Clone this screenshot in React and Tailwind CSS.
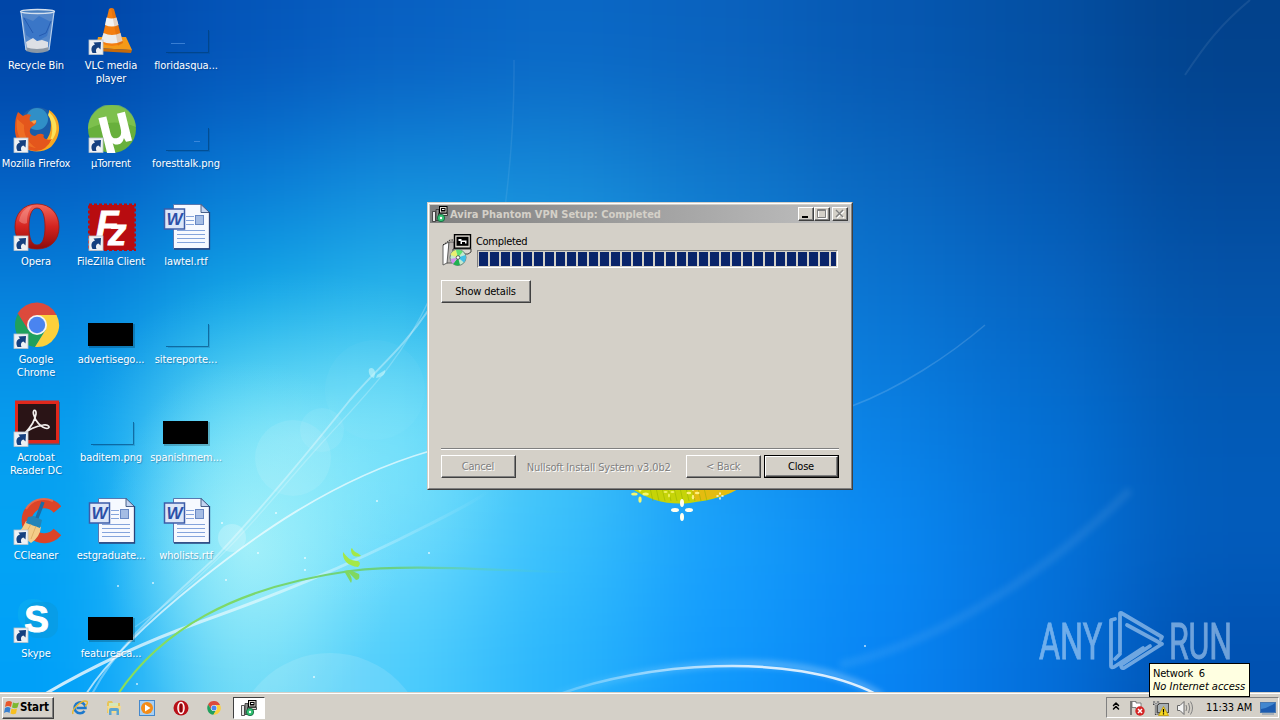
import { ChevronsUp } from "lucide-react";

// rough colour map of the wallpaper, blurred into a smooth glow
const WALL = [
  ["#0046a8", "#0455b9", "#0860c2", "#0a68c6", "#0a62be", "#0658b2", "#0450a4", "#02428c"],
  ["#0460c4", "#087ad6", "#128cdc", "#168ad8", "#1078cc", "#0a68c0", "#055ab4", "#034a9c"],
  ["#0684de", "#10a8e8", "#28b8ec", "#20a2e6", "#1488dc", "#0a74d2", "#0666c4", "#0454aa"],
  ["#069cee", "#58d8f6", "#70e0fa", "#44c4f6", "#1898ee", "#0a80e4", "#0470d4", "#025ab6"],
  ["#04a4f4", "#90ecfa", "#70dcfc", "#38c0fc", "#18a0fc", "#0a8af4", "#0474dc", "#025cbc"],
  ["#00a0f8", "#74dcf6", "#4cccfc", "#28b4fc", "#1098fc", "#0884f4", "#0470dc", "#0050b0"],
];

const Sparkle = ({ x, y, s = 1, fill = "#fffff0" }) => (
  <g transform={`translate(${x} ${y}) scale(${s})`} fill={fill}>
    <ellipse cx="0" cy="-7" rx="2" ry="4" />
    <ellipse cx="0" cy="7" rx="2" ry="4" />
    <ellipse cx="-7" cy="0" rx="4" ry="2" />
    <ellipse cx="7" cy="0" rx="4" ry="2" />
  </g>
);

const Wallpaper = () => (
  <svg className="absolute inset-0 h-full w-full" viewBox="0 0 1280 720">
    <defs>
      <filter id="mesh" filterUnits="userSpaceOnUse" x="-300" y="-300" width="1900" height="1300" colorInterpolationFilters="sRGB">
        <feGaussianBlur stdDeviation="55" />
      </filter>
      <filter id="soft" x="-30%" y="-30%" width="160%" height="160%">
        <feGaussianBlur stdDeviation="3" />
      </filter>
      <radialGradient id="glow">
        <stop offset="0" stopColor="#b8f6fa" stopOpacity="0.75" />
        <stop offset="0.5" stopColor="#a0f0fa" stopOpacity="0.4" />
        <stop offset="1" stopColor="#80e8fa" stopOpacity="0" />
      </radialGradient>
      <linearGradient id="stem" gradientUnits="userSpaceOnUse" x1="120" y1="0" x2="570" y2="0">
        <stop offset="0" stopColor="#8ade58" />
        <stop offset="0.6" stopColor="#6ad080" />
        <stop offset="1" stopColor="#50d0d0" stopOpacity="0" />
      </linearGradient>
      <linearGradient id="arc" gradientUnits="userSpaceOnUse" x1="560" y1="0" x2="880" y2="0">
        <stop offset="0" stopColor="#fff" stopOpacity="0.2" />
        <stop offset="0.6" stopColor="#fff" stopOpacity="0.8" />
        <stop offset="1" stopColor="#fff" stopOpacity="0.85" />
      </linearGradient>
      <linearGradient id="fade" gradientUnits="userSpaceOnUse" x1="60" y1="690" x2="490" y2="490">
        <stop offset="0" stopColor="#fff" stopOpacity="0.8" />
        <stop offset="0.5" stopColor="#fff" stopOpacity="0.5" />
        <stop offset="1" stopColor="#fff" stopOpacity="0" />
      </linearGradient>
    </defs>
    <g filter="url(#mesh)">
      {WALL.map((row, r) =>
        row.map((c, i) => {
          const x = i === 0 ? -300 : i * 160;
          const y = r === 0 ? -300 : r * 120;
          const w = i === 0 ? 461 : i === 7 ? 461 : 161;
          const h = r === 0 ? 421 : r === 5 ? 421 : 121;
          return <rect key={`${r}-${i}`} x={x} y={y} width={w} height={h} fill={c} />;
        })
      )}
    </g>
    <ellipse cx="250" cy="545" rx="150" ry="185" fill="url(#glow)" opacity="0.85" />
    <ellipse cx="300" cy="440" rx="230" ry="170" fill="url(#glow)" opacity="0.4" />
    <g fill="#fff">
      <circle cx="293" cy="458" r="38" opacity="0.09" />
      <circle cx="322" cy="430" r="22" opacity="0.07" />
      <circle cx="232" cy="538" r="14" opacity="0.22" />
      <circle cx="375" cy="390" r="50" opacity="0.03" />
      <circle cx="330" cy="750" r="97" opacity="0.12" />
    </g>
    <g fill="none" stroke="#fff">
      <path d="M45 694C100 662 150 640 200 622C270 597 340 570 430 524C455 511 475 502 490 490" stroke="url(#fade)" strokeWidth="3" />
      <path d="M86 694C108 660 145 624 200 580C250 540 330 480 430 451" strokeWidth="1.8" opacity="0.65" />
      <path d="M92 694C120 640 170 600 215 558C265 505 310 450 350 400C380 365 400 352 430 308" strokeWidth="2" opacity="0.35" />
      <path d="M135 627C220 570 270 500 320 445C370 390 400 362 430 298" strokeWidth="1.4" opacity="0.22" />
      <path d="M852 406C900 388 950 355 985 325" strokeWidth="1.5" opacity="0.15" />
      <path d="M482 335C500 260 515 160 514 60" strokeWidth="1.5" opacity="0.08" />
      <path d="M1185 75C1205 45 1220 25 1250 0" strokeWidth="2" opacity="0.08" />
      <path d="M840 665C950 640 1060 560 1130 490" strokeWidth="8" opacity="0.08" filter="url(#soft)" />
      <path d="M555 696C640 668 790 640 882 696" stroke="url(#arc)" strokeWidth="6" opacity="0.4" filter="url(#soft)" />
      <path d="M560 694C640 664 790 650 876 694" stroke="url(#arc)" strokeWidth="2.5" />
    </g>
    <path d="M118 694C160 632 230 588 350 571C410 564 480 570 570 572" fill="none" stroke="url(#stem)" strokeWidth="2.2" />
    <g fill="#a4e848">
      <path d="M343 552C342 560 348 566 358 567C361 564 360 562 358 561C350 561 347 557 343 552Z" />
      <path d="M351 549C351 555 354 558 361 556C358 552 354 553 352 548Z" />
      <path d="M344 571L351 583C353 580 351 575 348 572L356 580C359 580 360 577 359 574L350 570Z" fill="#80d860" />
    </g>
    <path d="M369 369c4-3 8 2 5 9c-4-1-6-5-5-9Zm8 6l8-5c1 4-3 7-9 8Z" fill="#c8f6fa" opacity="0.6" />
    <g fill="#fff" opacity="0.75">
      {[[226, 580], [276, 513], [258, 553], [305, 558], [305, 570], [377, 501], [222, 523], [137, 684], [118, 586], [153, 583], [429, 553], [314, 677], [865, 646]].map(([x, y]) => (
        <circle key={`${x}-${y}`} cx={x} cy={y} r="1" />
      ))}
    </g>
    <path d="M628 486C650 502 670 505 690 503C710 500 727 497 742 486Z" fill="#c6d408" />
    <path d="M690 486H742C730 496 710 499 695 501Z" fill="#e4bc10" />
    <g stroke="#8fae00" strokeWidth="0.7" opacity="0.7">
      {[650, 656, 662, 668, 674, 680, 686, 692, 698, 704].map((x) => (
        <path key={x} d={`M${x} 488L${x + 3} 501`} />
      ))}
    </g>
    <Sparkle x={682} y={510} />
    <Sparkle x={640} y={494} s={0.8} fill="#f4f870" />
    <Sparkle x={693} y={493} s={0.6} fill="#fff080" />
    <Sparkle x={669} y={492} s={0.5} fill="#f0f060" />
    <Sparkle x={720} y={496} s={0.35} />
  </svg>
);

const Shortcut = () => (
  <g>
    <rect x="1" y="33" width="14" height="14.500" fill="#eef1f4" stroke="#b9c4cc" strokeWidth="0.8" />
    <path d="M4.500 46C2.500 42 3.500 38.500 7 37.500L5.500 35.500L13 35L12.500 42.500L10.500 40.500C8 41 7.500 43.500 8.500 46Z" fill="#15407f" />
  </g>
);

const BinIcon = () => (
  <g>
    <path d="M8 5L13 43Q24 48 36 43L41 5Z" fill="#a8c8ec" opacity="0.5" />
    <path d="M10 10L20 14L26 9L38 15L34 29L23 35L13 28Z" fill="#2468c4" opacity="0.55" />
    <path d="M38 14L33 26L26 29M11 11L20 26" fill="none" stroke="#1c50a8" strokeWidth="1" opacity="0.7" />
    <path d="M13 35L20 31L24 34L29 33L35 35L35 42Q24 46 14 42Z" fill="#eceae8" opacity="0.9" />
    <path d="M12 40Q24 44 36 40L35.500 44Q24 48 13 44Z" fill="#8b98a6" />
    <path d="M8 5L13 43M41 5L36 43" stroke="#b8d0ec" strokeWidth="1.2" />
    <ellipse cx="24.500" cy="4.500" rx="17" ry="2" fill="#4a80c0" stroke="#d4e0ee" strokeWidth="1.300" />
  </g>
);

const VlcIcon = () => (
  <g>
    <path d="M10 30L38 30L44 43L8 41Z" fill="#f49a18" />
    <path d="M8 41L44 43L43 46L8 44Z" fill="#c86a08" />
    <path d="M21 2Q23.500 0 26 2L35 36Q24 42 13 36Z" fill="#f47e10" />
    <path d="M18.500 10.500Q23.500 12.500 28.500 10.500L30.500 18Q24 21 17 18Z" fill="#f2f2f2" />
    <path d="M15.500 26Q24 30 32.500 26L34.500 34Q24 39 13 34Z" fill="#ececec" />
    <path d="M23 1L26 2L35 36L30 39Z" fill="#a84800" opacity="0.18" />
  </g>
);

const FirefoxIcon = () => (
  <g>
    <circle cx="25" cy="22" r="19.500" fill="#1a5ca8" />
    <circle cx="24" cy="14" r="11" fill="#40b0dc" opacity="0.6" />
    <path d="M36 5C48 12 50 30 38 42C30 48 18 47 14 44C34 42 42 28 36 9Z" fill="#f8a820" />
    <path d="M36 7C46 16 46 30 36 38C41 28 40 18 35 10Z" fill="#fce058" />
    <path d="M5 7L10 11Q14 8 18 10C16 13 16 15 18 17L23 16Q24 19 20 21C15 24 16 30 22 31Q27 27 31 30C29 33 34 36 39 34Q33 46 23 46C8 45 1 34 2 22Q2 13 5 7Z" fill="#e4561c" />
    <path d="M4 14C2 30 9 41 23 43Q10 34 11 20Z" fill="#f8842c" opacity="0.55" />
    <path d="M18 16L23 15Q24 17 21 19Z" fill="#f8a048" />
  </g>
);

const TorrentIcon = () => (
  <g>
    <circle cx="24" cy="24" r="24" fill="#68b03c" />
    <path d="M0 24A24 24 0 0 1 48 22Q24 12 0 24Z" fill="#8ccc58" opacity="0.6" />
    <text x="27" y="40" textAnchor="middle" fontSize="54" fontWeight="700" fill="#fff" transform="rotate(-14 24 24)" className="font-['Open_Sans',sans-serif]">µ</text>
  </g>
);

const OperaIcon = () => (
  <g>
    <defs>
      <linearGradient id="opr" x1="0" y1="0" x2="0" y2="1">
        <stop offset="0" stopColor="#f4685c" />
        <stop offset="0.5" stopColor="#d42420" />
        <stop offset="1" stopColor="#8c0c0c" />
      </linearGradient>
    </defs>
    <path fillRule="evenodd" d="M24 1C38 1 46 11 46 24C46 37 38 46 24 46C10 46 2 37 2 24C2 11 10 1 24 1ZM24 5C18 5 16 14 16 24C16 34 18 42 24 42C30 42 32 34 32 24C32 14 30 5 24 5Z" fill="url(#opr)" stroke="#9c1810" strokeWidth="0.8" />
    <path d="M6 18C8 8 14 4 19 3C15 8 14 14 14 20Q10 22 6 18Z" fill="#ffc4bc" opacity="0.35" />
  </g>
);

const FileZillaIcon = () => (
  <g>
    <rect x="1.500" y="2" width="45" height="45" fill="#b80c10" />
    <rect x="1" y="1.500" width="46" height="46" fill="none" stroke="#b80c10" strokeWidth="2" strokeDasharray="3 2" />
    <g fill="#fff" stroke="#fff" strokeWidth="0.8" fontWeight="700" fontStyle="italic" className="font-['Liberation_Sans',sans-serif]">
      <text x="8" y="34" fontSize="37">F</text>
      <text x="20" y="42" fontSize="37">z</text>
    </g>
  </g>
);

const ChromeMark = () => (
  <g>
    <path d="M24 24L4.600 12.500A22 22 0 0 1 43.500 14Z" fill="#dc4a3c" />
    <path d="M24 14H43.500L34 28Z" fill="#fcd03c" />
    <path d="M4.600 12.500L15 29L24 14Z" fill="#dc4a3c" />
    <path d="M5 13L15.500 29.500L33 28L22 46A22 22 0 0 1 5 13Z" fill="#20a05c" />
    <path d="M32.500 29L24 14H43.500A22 22 0 0 1 22 46Z" fill="#fcd03c" />
    <circle cx="24" cy="24" r="10" fill="#f4f4f4" />
    <circle cx="24" cy="24" r="8.200" fill="#4a84f0" />
  </g>
);

const AcrobatIcon = () => (
  <g>
    <rect x="3" y="3" width="44" height="43" fill="#402020" opacity="0.4" />
    <rect x="2" y="1.500" width="44" height="43" fill="#e0281c" />
    <rect x="5" y="5" width="38" height="36" fill="#2a1416" />
    <path d="M12 34C17 29 22 21 23 15C23.500 10 19.500 10 20.500 15C22 22 28 29 34 29.500C38 29 36 25 30 26C23 27 15 31 12 34Z" fill="none" stroke="#f4f0ee" strokeWidth="1.700" />
  </g>
);

const CCleanerIcon = () => (
  <g>
    <path d="M44.500 12.500A17.500 17.500 0 1 0 44.500 35" fill="none" stroke="#dc4428" strokeWidth="10" />
    <path d="M40 4A21 21 0 0 0 13 12" fill="none" stroke="#f08060" strokeWidth="2" opacity="0.6" />
    <path d="M13 24L28 30Q27 40 18 46L5 36Q10 31 13 24Z" fill="#f4cc88" />
    <path d="M15 20L21 19L29 23L27 31L13 26Z" fill="#2484b8" />
    <path d="M30 5L24 21" stroke="#1c6ca4" strokeWidth="3.500" />
    <path d="M18 27L12 38M23 29L18 42" stroke="#d8a860" strokeWidth="0.8" />
  </g>
);

const SkypeIcon = () => (
  <g>
    <rect x="5" y="4" width="30" height="30" rx="13" fill="#0cb0f0" opacity="0.5" />
    <rect x="12" y="7" width="33" height="36" rx="12" fill="#0c98d8" opacity="0.5" />
    <text x="23.500" y="37" textAnchor="middle" fontSize="37" fontWeight="700" fill="#fff" stroke="#fff" className="font-['Liberation_Sans',sans-serif]">S</text>
  </g>
);

const WordIcon = () => (
  <g>
    <path d="M10.500 1.500H38L46.500 9.500V45.500H10.500Z" fill="#f6f9ff" stroke="#5878b0" strokeWidth="1" />
    <path d="M38 1.500V9.500H46.500Z" fill="#c4d4f0" stroke="#38507c" strokeWidth="0.9" />
    <path d="M46.500 9V46H11" fill="none" stroke="#28447c" strokeWidth="1.300" />
    <path d="M23 13.500H31M23 17.500H31M23 21.500H31M14 27.500H42M14 31.500H42M14 35.500H42M14 39.500H42" stroke="#84a4dc" strokeWidth="1" />
    <rect x="32.500" y="12.500" width="8" height="9" fill="#a4bce4" stroke="#6888c4" />
    <rect x="1.500" y="6" width="20" height="20" fill="#dce6f8" stroke="#3c5ca8" strokeWidth="1.500" />
    <text x="11.500" y="22" textAnchor="middle" fontSize="17" fontWeight="700" fontStyle="italic" fill="#2c50a8" className="font-['Liberation_Sans',sans-serif]">W</text>
  </g>
);

const BlackThumb = () => (
  <g>
    <rect x="1" y="23" width="46" height="24" fill="#000" opacity="0.2" />
    <rect x="0" y="22" width="45" height="23" fill="#000" />
  </g>
);

const ClearThumb = () => (
  <g fill="none" stroke="#003c70">
    <path d="M45.500 23V45.500H3" strokeWidth="1" opacity="0.6" />
    <path d="M46.500 24V46.500H5" strokeWidth="1" opacity="0.18" />
  </g>
);

const ClearThumbMark = ({ x, y }) => (
  <g>
    <ClearThumb />
    <path d={`M${x} ${y}h${x > 20 ? 6 : 14}`} stroke="#5c9ce8" strokeWidth="1" opacity="0.6" />
  </g>
);

const ICONS = [
  { label: ["Recycle Bin"], icon: <BinIcon /> },
  { label: ["Mozilla Firefox"], icon: <FirefoxIcon />, link: true },
  { label: ["Opera"], icon: <OperaIcon />, link: true },
  { label: ["Google", "Chrome"], icon: <ChromeMark />, link: true },
  { label: ["Acrobat", "Reader DC"], icon: <AcrobatIcon />, link: true },
  { label: ["CCleaner"], icon: <CCleanerIcon />, link: true },
  { label: ["Skype"], icon: <SkypeIcon />, link: true },
  { label: ["VLC media", "player"], icon: <VlcIcon />, link: true },
  { label: ["µTorrent"], icon: <TorrentIcon />, link: true },
  { label: ["FileZilla Client"], icon: <FileZillaIcon />, link: true },
  { label: ["advertisego..."], icon: <BlackThumb /> },
  { label: ["baditem.png"], icon: <ClearThumb /> },
  { label: ["estgraduate..."], icon: <WordIcon /> },
  { label: ["featuresca..."], icon: <BlackThumb /> },
  { label: ["floridasqua..."], icon: <ClearThumbMark x={8} y={36.5} /> },
  { label: ["foresttalk.png"], icon: <ClearThumbMark x={31} y={36.5} /> },
  { label: ["lawtel.rtf"], icon: <WordIcon /> },
  { label: ["sitereporte..."], icon: <ClearThumb /> },
  { label: ["spanishmem..."], icon: <BlackThumb /> },
  { label: ["wholists.rtf"], icon: <WordIcon /> },
];

const DesktopIcon = ({ item }) => (
  <div className="flex flex-col items-center pt-[7px]">
    <svg className="ml-px h-12 w-12 shrink-0" viewBox="0 0 48 48">
      {item.icon}
      {item.link && <Shortcut />}
    </svg>
    <div className="mt-1 mr-px text-center tracking-[-0.08px] whitespace-nowrap text-white [text-shadow:1px_1px_1px_rgba(0,40,90,0.35)]">
      {item.label.map((line) => (
        <p key={line}>{line}</p>
      ))}
    </div>
  </div>
);

const SetupIcon = ({ className }) => (
  <svg className={className} viewBox="0 0 32 32">
    <path d="M2 11L8 8V28L2 31Z" fill="#fff" stroke="#606060" />
    <path d="M8 8H13V29H6Z" fill="#b8b4b0" stroke="#404040" strokeWidth="0.8" />
    <path d="M2 11L9 6H14" fill="none" stroke="#202020" strokeDasharray="1.500 1" />
    <rect x="13.500" y="0.700" width="16" height="13.500" fill="#dcd8d0" stroke="#000" strokeWidth="1.400" />
    <rect x="15.500" y="2.800" width="12" height="9" fill="#000" />
    <path d="M17.500 5h3v1.500h5v3h-1.500v-1.500h-3v2h-1.500v-3h-2Z" fill="#fff" />
    <path d="M12 15H30V18L27 20H12Z" fill="#dcd8d0" stroke="#202020" strokeWidth="0.8" />
    <circle cx="17" cy="23.500" r="8" fill="#c4e8d0" stroke="#507068" strokeWidth="0.8" />
    <path d="M17 23.500L9.500 21A8 8 0 0 1 15 16Z" fill="#e8f070" />
    <path d="M17 23.500L15 16A8 8 0 0 1 22 17.500Z" fill="#60e070" />
    <path d="M17 23.500L24.500 21A8 8 0 0 1 23 28.500Z" fill="#40c0e8" />
    <path d="M17 23.500L19 31A8 8 0 0 1 12 30Z" fill="#20b050" />
    <path d="M17 23.500L12 30A8 8 0 0 1 9.500 25Z" fill="#d090e8" />
    <circle cx="17" cy="23.500" r="1.800" fill="#fff" stroke="#444" strokeWidth="0.8" />
  </svg>
);

// pixel-sized version for the title bar and the task button
const SmallSetupIcon = () => (
  <svg className="h-4 w-4 shrink-0" viewBox="0 0 16 16">
    <path d="M0.500 5.500H3.500V15.500H0.500Z" fill="#e8e8e8" stroke="#303030" strokeWidth="0.8" />
    <path d="M4 3.500H7V14.500H4Z" fill="#909090" stroke="#303030" strokeWidth="0.8" />
    <rect x="7.500" y="0.500" width="7.500" height="6.500" fill="#dcd8d0" stroke="#000" />
    <rect x="9" y="2" width="4.500" height="3.500" fill="#000" />
    <path d="M10 3.500H12.500" stroke="#fff" />
    <path d="M6.500 7.500H15.500V9.500H6.500Z" fill="#dcd8d0" stroke="#202020" strokeWidth="0.8" />
    <circle cx="9" cy="12" r="3.700" fill="#30c070" stroke="#106038" strokeWidth="0.8" />
    <circle cx="9" cy="12" r="1.200" fill="#fff" />
  </svg>
);

const raised = "border border-t-white border-l-white border-r-[#404040] border-b-[#404040] shadow-[inset_-1px_-1px_0_#808080]";

const Button = ({ children, className = "", disabled }) => (
  <button
    className={`flex h-[23px] items-center justify-center bg-[#d4d0c8] pr-px ${raised} ${disabled ? "text-[#808080] [text-shadow:1px_1px_0_#fff]" : "text-black"} ${className}`}
  >
    {children}
  </button>
);

const CaptionButton = ({ children, label }) => (
  <button aria-label={label} className={`flex h-[14px] w-4 items-center justify-center bg-[#d4d0c8] ${raised}`}>
    <svg className="h-[10px] w-3" viewBox="0 0 12 10" fill="none">
      {children}
    </svg>
  </button>
);

const SetupWindow = () => (
  <div className="absolute top-[202px] left-[427px] h-[288px] w-[426px] border border-t-[#d4d0c8] border-l-[#d4d0c8] border-r-[#404040] border-b-[#404040] bg-[#d4d0c8]">
    <div className="flex h-full flex-col border border-t-white border-l-white border-r-[#808080] border-b-[#808080] p-px">
      <div className="flex h-[18px] shrink-0 items-center bg-gradient-to-r from-[#808080] to-[#c0c0c0] px-0.5">
        <SmallSetupIcon />
        <h1 className="ml-[2px] flex-1 text-[11px] font-bold tracking-[-0.04px] whitespace-nowrap text-[#d4d0c8]">Avira Phantom VPN Setup: Completed</h1>
        <CaptionButton label="Minimize">
          <path d="M2 8H8" stroke="#000" strokeWidth="2" />
        </CaptionButton>
        <CaptionButton label="Maximize">
          <path d="M2.500 1.500H10.500V9.500H2.500Z" stroke="#fff" />
          <path d="M1.500 0.500H9.500V8.500H1.500ZM1.500 1.500H9.500" stroke="#808080" />
        </CaptionButton>
        <div className="ml-0.5 flex">
          <CaptionButton label="Close">
            <path d="M3 2L10 9M10 2L3 9" stroke="#fff" strokeWidth="1.500" />
            <path d="M2 1L9 8M9 1L2 8" stroke="#808080" strokeWidth="1.500" />
          </CaptionButton>
        </div>
      </div>

      <div className="flex flex-1 flex-col px-[11px] pt-[11px]">
        <div className="flex">
          <SetupIcon className="h-8 w-8 shrink-0" />
          <div className="ml-1 w-[361px]">
            <p className="relative top-px -ml-px tracking-[-0.3px]">Completed</p>
            <div className="mt-[3px] flex h-[18px] gap-0.5 overflow-hidden border border-t-[#808080] border-l-[#808080] border-r-white border-b-white p-px">
              {[...Array(33)].map((_, i) => (
                <div key={i} className={`h-full bg-[#0a246a] ${i === 32 ? "w-[5px]" : "w-[9px] shrink-0"}`} />
              ))}
            </div>
          </div>
        </div>
        <Button className="mt-3 w-[90px]">Show details</Button>
        <div className="mt-auto h-0.5 w-[398px] border-t border-[#808080] bg-white" />
        <div className="mt-[5px] mb-[9px] flex items-center">
          <Button className="w-[75px]" disabled>Cancel</Button>
          <span className="ml-[11px] w-[160px] pt-0.5 tracking-[-0.13px] whitespace-nowrap text-[#808080] [text-shadow:1px_1px_0_#fff]">Nullsoft Install System v3.0b2</span>
          <Button className="w-[75px]" disabled>&lt; Back</Button>
          <div className="ml-[3px] border border-black">
            <button className={`flex h-[21px] w-[73px] items-center justify-center bg-[#d4d0c8] pr-px ${raised}`}>Close</button>
          </div>
        </div>
      </div>
    </div>
  </div>
);

const Watermark = () => (
  <svg className="absolute top-[605px] left-[1036px] h-[70px] w-[200px]" viewBox="0 0 200 70" opacity="0.5">
    <g fill="#dceeff" stroke="#dceeff" strokeWidth="0.8" fontSize="50.500" className="font-[Roboto,sans-serif]">
      <text x="3" y="54" textLength="63" lengthAdjust="spacingAndGlyphs">ANY</text>
      <text x="133" y="54" textLength="63" lengthAdjust="spacingAndGlyphs">RUN</text>
    </g>
    <g fill="none" stroke="#dceeff" strokeWidth="3.800" strokeLinejoin="round" strokeLinecap="round">
      <path d="M79 14L75 15V61Q75 63 78 62L107 43" />
      <path d="M84 47V9Q84 7 87 9L126 32L125 34" />
      <path d="M91 20L126 39L88 63Q85 64 85 60L114 41" />
      <path d="M84 49L79 54" />
    </g>
  </svg>
);

const QuickIcon = ({ children }) => (
  <svg className="h-4 w-4" viewBox="0 0 16 16">
    {children}
  </svg>
);

const Taskbar = () => (
  <div className="absolute inset-x-0 bottom-0 flex h-7 items-center border-t border-[#d4d0c8] bg-[#d4d0c8] shadow-[inset_0_1px_0_#fff]">
    <button className={`mt-0.5 ml-0.5 flex h-[22px] w-[52px] items-center bg-[#d4d0c8] pl-px ${raised}`}>
      <svg className="h-4 w-4 shrink-0" viewBox="0 0 16 16">
        <path d="M2 2Q5 0 8 2L7 7Q4 5 1 7Z" fill="#e8582c" />
        <path d="M9 2.500Q12 4 15 2.500L13.500 7.500Q11 9 8 7.500Z" fill="#7cb830" />
        <path d="M1 8Q4 6 6.500 8L5.500 13Q3 11 0 13Z" fill="#3880d0" />
        <path d="M7.500 8.500Q10 10 13 8.500L12 13.500Q9 15 6.500 13.500Z" fill="#f8c020" />
      </svg>
      <span className="text-[11.5px] font-bold tracking-[-0.15px]">Start</span>
    </button>
    <div className="mt-0.5 ml-[18px] flex gap-[17.5px]">
      <QuickIcon>
        <path d="M12.500 11A5.500 5.500 0 1 1 13.500 8H4.500" fill="none" stroke="#1c78cc" strokeWidth="2.500" />
        <path d="M1 14C-1 10 10 -1 15 1.500Q16.500 3 13 6.500" fill="none" stroke="#e8b830" strokeWidth="1.400" />
      </QuickIcon>
      <QuickIcon>
        <path d="M1 3L2 1H6L7 3H14V13H1Z" fill="#e8c458" />
        <path d="M3 3H12V7H3Z" fill="#d4e8b8" />
        <path d="M1 6H15L14 13H2Z" fill="#f4dc90" />
        <path d="M3 15V10Q3 8 5 8H11Q13 8 13 10V15H10.500V11H5.500V15Z" fill="#5ca4d0" />
      </QuickIcon>
      <QuickIcon>
        <rect x="0.500" y="0.500" width="15" height="15" fill="#a8d0f4" stroke="#4488cc" />
        <circle cx="8" cy="8" r="6" fill="#f48c18" />
        <path d="M6 4.500L11.500 8L6 11.500Z" fill="#fff" />
      </QuickIcon>
      <QuickIcon>
        <circle cx="8" cy="8" r="7.500" fill="#b81018" />
        <ellipse cx="8" cy="8" rx="3" ry="5.500" fill="#d43030" stroke="#fff" strokeWidth="1.500" />
        <path d="M8 4V12" stroke="#800810" strokeWidth="2" />
      </QuickIcon>
      <svg className="h-4 w-4" viewBox="-2 -2 52 52">
        <ChromeMark />
      </svg>
    </div>
    <div className="mt-0.5 ml-[11px] flex h-[22px] w-8 items-center justify-center border border-t-[#404040] border-l-[#404040] border-r-white border-b-white bg-white">
      <SmallSetupIcon />
    </div>
    <div className="mt-0.5 mr-px ml-auto flex h-[21px] w-[173px] items-center border border-t-[#808080] border-l-[#808080] border-r-white border-b-white pl-[3px]">
      <ChevronsUp className="-mt-1 h-3 w-3 text-black" strokeWidth={3} />
      <svg className="ml-[7px] h-4 w-4" viewBox="0 0 16 16">
        <path d="M2 15V1" stroke="#606060" strokeWidth="1.500" />
        <path d="M3 1.500H7V3H12V9H7V7.500H3Z" fill="#fff" stroke="#686868" strokeWidth="0.8" />
        <circle cx="11" cy="11" r="4.700" fill="#d42424" />
        <path d="M9 9L13 13M13 9L9 13" stroke="#fff" strokeWidth="1.500" />
      </svg>
      <svg className="ml-2 h-4 w-4" viewBox="0 0 16 16">
        <rect x="4.500" y="3.500" width="11" height="9" fill="#a8b0b4" stroke="#505050" />
        <path d="M1 1V4H5V1M3 4V14H7" fill="none" stroke="#404040" strokeWidth="2.200" />
        <path d="M1 1V4H5V1M3 4V14H7" fill="none" stroke="#fff" strokeWidth="0.8" />
        <path d="M10.500 6.500L15.500 15.500H5.500Z" fill="#f8d820" stroke="#b89000" strokeWidth="0.7" />
        <path d="M10.500 9V12.500M10.500 13.300V14.500" stroke="#000" strokeWidth="1.200" />
      </svg>
      <svg className="ml-2 h-4 w-4" viewBox="0 0 16 16" fill="none">
        <path d="M0.500 5.500H3L7 1.500V14.500L3 10.500H0.500Z" fill="#f4f4f4" stroke="#686868" />
        <path d="M9 5Q10.500 8 9 11M11.500 3Q14 8 11.500 13M13.500 1.500Q17.500 8 13.500 14.500" stroke="#808080" />
      </svg>
      <span className="ml-[13px] text-[11px] tracking-[-0.1px] whitespace-nowrap">11:33 AM</span>
      <svg className="mr-0.5 ml-auto h-[14px] w-4" viewBox="0 0 16 14">
        <rect x="0.500" y="1.500" width="15" height="10" fill="#1c5cb0" stroke="#4878b0" />
        <path d="M1 8Q8 7 15 2V2H1Z" fill="#5ca4e4" opacity="0.6" />
        <path d="M2 13H14" stroke="#7890a8" />
      </svg>
    </div>
  </div>
);

const App = () => (
  <div className="relative h-[720px] w-[1280px] overflow-hidden bg-[#0a80e4] font-['DejaVu_Sans_Condensed','DejaVu_Sans',sans-serif] text-[11px] leading-[13px] tracking-[-0.2px] text-black">
    <Wallpaper />
    <div className="relative -ml-px grid w-[225px] auto-cols-[75px] grid-flow-col grid-rows-[repeat(7,98px)]">
      {ICONS.map((item) => (
        <DesktopIcon key={item.label[0]} item={item} />
      ))}
    </div>
    <SetupWindow />
    <Watermark />
    <Taskbar />
    <div className="absolute top-[663px] left-[1149px] h-[34px] w-[101px] border border-black bg-[#ffffe1] px-[3px] pt-[3px] whitespace-nowrap">
      <p>Network&nbsp; 6</p>
      <p className="tracking-[-0.03px] italic">No Internet access</p>
    </div>
  </div>
);

export default App;
